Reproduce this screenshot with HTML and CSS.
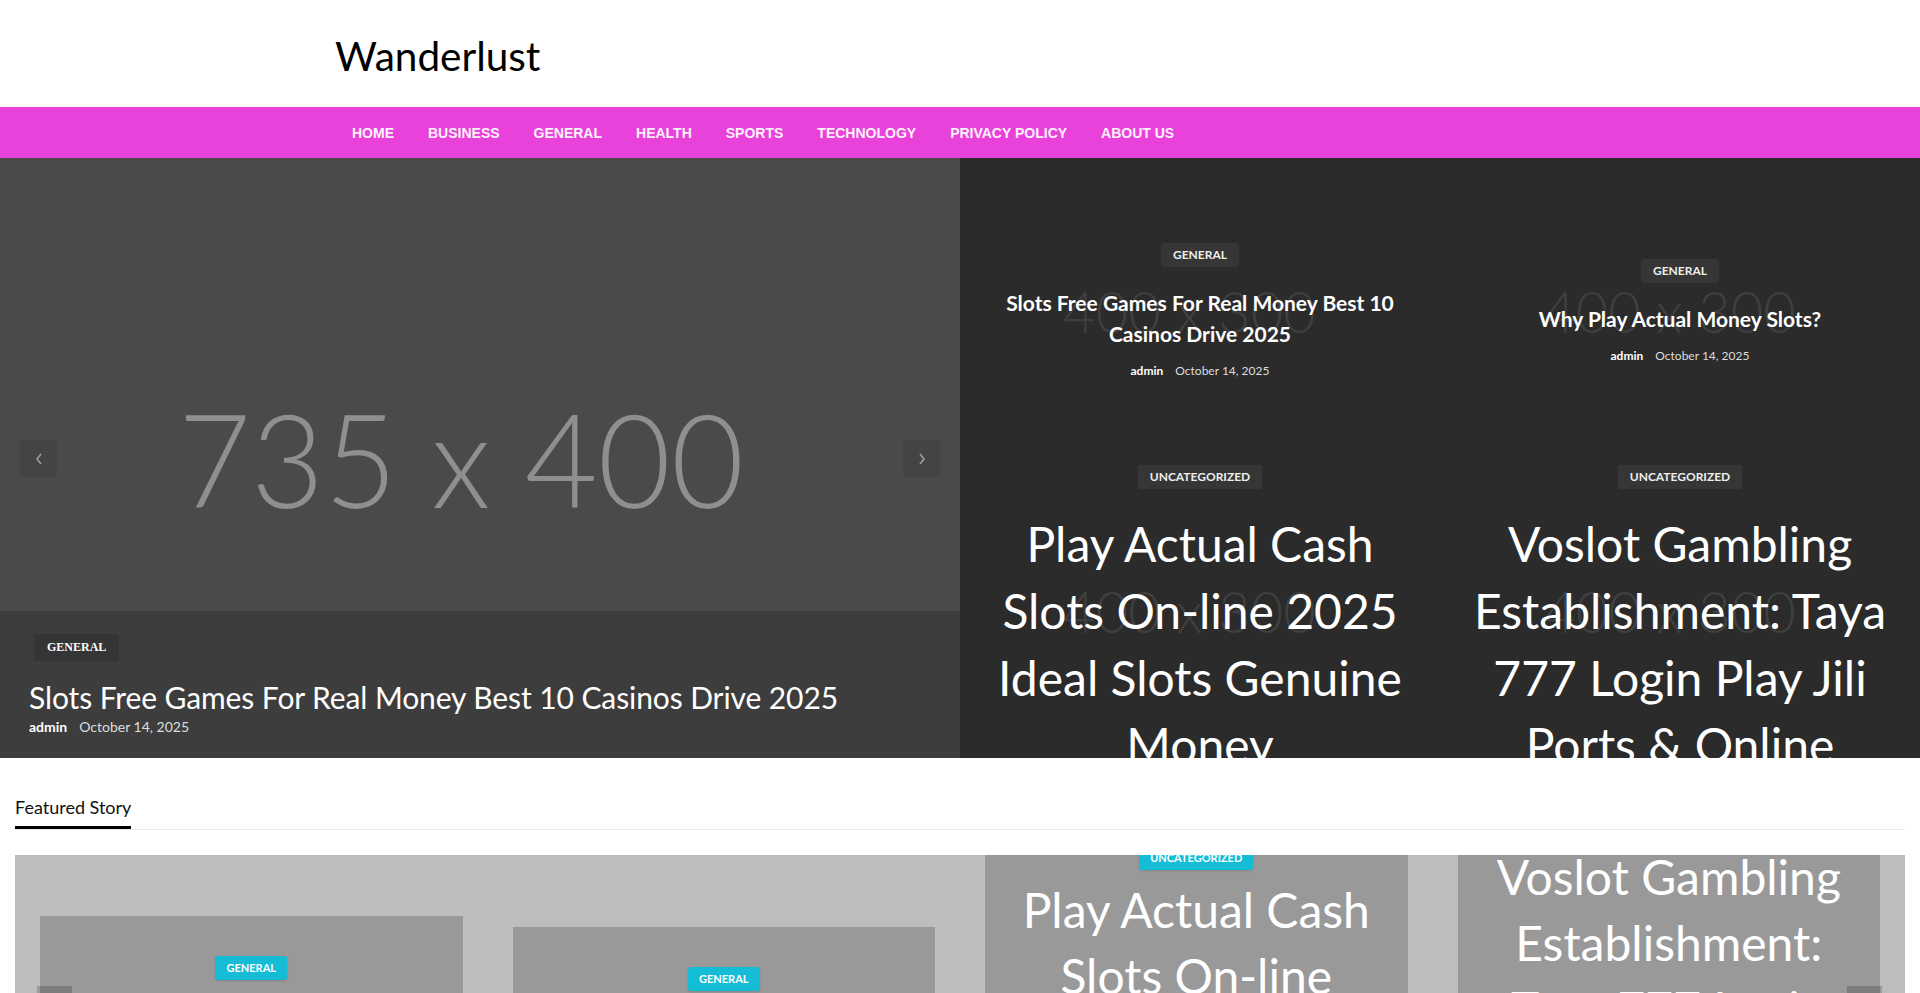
FILE: index.html
```html
<!DOCTYPE html>
<html lang="en">
<head>
<meta charset="UTF-8">
<meta name="viewport" content="width=device-width, initial-scale=1.0">
<title>Wanderlust</title>
<link rel="stylesheet" href="styles.css">
</head>
<body>

<header class="site-header">
  <div class="container">
    <a class="logo" href="#">Wanderlust</a>
  </div>
</header>

<nav class="main-nav">
  <div class="container">
    <ul>
      <li><a href="#home">HOME</a></li>
      <li><a href="#business">BUSINESS</a></li>
      <li><a href="#general">GENERAL</a></li>
      <li><a href="#health">HEALTH</a></li>
      <li><a href="#sports">SPORTS</a></li>
      <li><a href="#technology">TECHNOLOGY</a></li>
      <li><a href="#privacy">PRIVACY POLICY</a></li>
      <li><a href="#about">ABOUT US</a></li>
    </ul>
  </div>
</nav>

<section class="hero">
  <div class="hero-slider">
    <svg class="ph" viewBox="0 0 960 600" preserveAspectRatio="none">
      <text x="178" y="350" font-size="130" textLength="566" lengthAdjust="spacingAndGlyphs">735 x 400</text>
    </svg>
    <button class="arrow prev" aria-label="Previous">
      <svg width="10" height="14" viewBox="0 0 10 14"><polyline points="7,2 3,7 7,12" /></svg>
    </button>
    <button class="arrow next" aria-label="Next">
      <svg width="10" height="14" viewBox="0 0 10 14"><polyline points="3,2 7,7 3,12" /></svg>
    </button>
    <div class="hero-caption">
      <span class="cat-serif">GENERAL</span>
      <h2>Slots Free Games For Real Money Best 10 Casinos Drive 2025</h2>
      <div class="meta"><b>admin</b><span>October 14, 2025</span></div>
    </div>
  </div>

  <div class="hero-grid">
    <article class="grid-item">
      <svg class="ph" viewBox="0 0 480 300"><text x="103" y="175" font-size="58" textLength="253" lengthAdjust="spacingAndGlyphs">400 x 300</text></svg>
      <div class="grid-inner">
        <span class="cat">GENERAL</span>
        <h3 class="title-sm">Slots Free Games For Real Money Best 10 Casinos Drive 2025</h3>
        <div class="meta"><b>admin</b><span>October 14, 2025</span></div>
      </div>
    </article>
    <article class="grid-item">
      <svg class="ph" viewBox="0 0 480 300"><text x="103" y="175" font-size="58" textLength="253" lengthAdjust="spacingAndGlyphs">400 x 300</text></svg>
      <div class="grid-inner">
        <span class="cat">GENERAL</span>
        <h3 class="title-sm">Why Play Actual Money Slots?</h3>
        <div class="meta"><b>admin</b><span>October 14, 2025</span></div>
      </div>
    </article>
    <article class="grid-item">
      <svg class="ph" viewBox="0 0 480 300"><text x="103" y="175" font-size="58" textLength="253" lengthAdjust="spacingAndGlyphs">400 x 300</text></svg>
      <div class="grid-inner">
        <span class="cat">UNCATEGORIZED</span>
        <h3 class="title-lg">Play Actual Cash Slots On-line 2025 Ideal Slots Genuine Money</h3>
        <div class="meta"><b>admin</b><span>October 14, 2025</span></div>
      </div>
    </article>
    <article class="grid-item">
      <svg class="ph" viewBox="0 0 480 300"><text x="103" y="175" font-size="58" textLength="253" lengthAdjust="spacingAndGlyphs">400 x 300</text></svg>
      <div class="grid-inner">
        <span class="cat">UNCATEGORIZED</span>
        <h3 class="title-lg">Voslot Gambling Establishment: Taya 777 Login Play Jili Ports &amp; Online Casino</h3>
        <div class="meta"><b>admin</b><span>October 14, 2025</span></div>
      </div>
    </article>
  </div>
</section>

<section class="featured">
  <h3 class="section-title"><span>Featured Story</span></h3>
  <div class="feat-slider">
    <article class="feat-card">
      <span class="cat-cyan">GENERAL</span>
      <h4 class="title-sm">Slots Free Games For Real Money Best 10 Casinos Drive 2025</h4>
      <div class="meta"><b>admin</b><span>October 14, 2025</span></div>
    </article>
    <article class="feat-card">
      <span class="cat-cyan">GENERAL</span>
      <h4 class="title-sm">Why Play Actual Money Slots?</h4>
      <div class="meta"><b>admin</b><span>October 14, 2025</span></div>
    </article>
    <article class="feat-card">
      <span class="cat-cyan">UNCATEGORIZED</span>
      <h4 class="title-lg">Play Actual Cash Slots On-line 2025 Ideal Slots Genuine Money</h4>
      <div class="meta"><b>admin</b><span>October 14, 2025</span></div>
    </article>
    <article class="feat-card">
      <span class="cat-cyan">UNCATEGORIZED</span>
      <h4 class="title-lg">Voslot Gambling Establishment: Taya 777 Login Play Jili Ports &amp; Online Casino</h4>
      <div class="meta"><b>admin</b><span>October 14, 2025</span></div>
    </article>
    <button class="feat-arrow left" aria-label="Previous"></button>
    <button class="feat-arrow right" aria-label="Next"></button>
  </div>
</section>

</body>
</html>
```

FILE: styles.css
```css
/* base */
body {
  margin: 0;
  padding: 0;
  font-family: Lato, "Open Sans", Arial, sans-serif;
  color: #222;
  background: #fff;
}
a {
  text-decoration: none;
  color: inherit;
}
.container {
  padding: 0 335px;
}

/* header */
.site-header {
  padding: 32px 0 27px;
}
.logo {
  display: block;
  font-size: 40.5px;
  line-height: 48px;
  color: #000;
}

/* navigation */
.main-nav {
  background-color: #e942da;
}
.main-nav ul {
  list-style-type: none;
  margin: 0;
  padding: 0;
  display: flex;
}
.main-nav li a {
  display: block;
  padding: 1px 17px 0;
  line-height: 50px;
  font-family: "Liberation Sans", Arial, sans-serif;
  font-weight: bold;
  font-size: 14px;
  color: #fdf2fc;
}

/* hero */
.hero {
  display: grid;
  grid-template-columns: 1fr 1fr;
  height: 600px;
}
.hero-slider {
  position: relative;
  background-color: #4a4a4a;
  display: flex;
  flex-direction: column;
  justify-content: flex-end;
  overflow: hidden;
}
.ph {
  position: absolute;
  top: 0;
  left: 0;
  width: 100%;
  height: 100%;
  font-family: Lato, sans-serif;
  font-weight: 300;
}
.hero-slider .ph text {
  fill: #8f8f8f;
}
.arrow {
  position: absolute;
  top: 282px;
  width: 37px;
  height: 37px;
  border: 0;
  padding: 0;
  background: rgba(0, 0, 0, 0.08);
  display: flex;
  align-items: center;
  justify-content: center;
  cursor: pointer;
}
.arrow.prev { left: 20px; }
.arrow.next { right: 20px; }
.arrow polyline {
  fill: none;
  stroke: #9c9c9c;
  stroke-width: 1.6;
}
.hero-caption {
  position: relative;
  background-color: #3d3d3d;
  padding: 23px 30px 22px 29px;
  color: #fff;
}
.cat-serif {
  display: inline-block;
  margin-left: 5px;
  padding: 7px 13px;
  line-height: 13px;
  font-family: "Liberation Serif", "Times New Roman", serif;
  font-weight: bold;
  font-size: 12px;
  background: rgba(0, 0, 0, 0.12);
  color: #fff;
}
.hero-caption h2 {
  margin: 16px 0 1px;
  font-size: 30px;
  font-weight: 400;
  line-height: 40px;
  letter-spacing: -0.1px;
}
.meta {
  font-size: 14px;
  line-height: 18px;
  color: #ddd;
}
.meta b {
  color: #fff;
  margin-right: 12px;
}

/* right grid */
.hero-grid {
  display: grid;
  grid-template-columns: 1fr 1fr;
  grid-template-rows: 300px 300px;
  background-color: #2b2b2b;
}
.grid-item {
  position: relative;
  overflow: hidden;
  display: flex;
  padding: 7px 20px 0;
  text-align: center;
}
.grid-item .ph text {
  fill: #3f3f3f;
}
.grid-inner {
  position: relative;
  margin: auto;
  width: 100%;
  display: flex;
  flex-direction: column;
  align-items: center;
  color: #fff;
}
.cat {
  padding: 6px 12px;
  line-height: 12px;
  font-size: 12px;
  font-weight: bold;
  background: #363636;
  color: #eee;
  border-radius: 3px;
  margin-bottom: 20px;
}
.title-sm {
  margin: 0 0 13px;
  font-size: 21px;
  font-weight: bold;
  line-height: 31px;
}
.title-lg {
  margin: 1px 0 11px;
  font-size: 48px;
  font-weight: 400;
  line-height: 67px;
}
.grid-item .meta {
  font-size: 12px;
}

/* featured story */
.featured {
  padding: 37px 15px 0;
}
.section-title {
  margin: 0;
  font-size: 18px;
  font-weight: 400;
  line-height: 24px;
  color: #111;
  border-bottom: 1px solid #e9e9e9;
}
.section-title span {
  display: inline-block;
  padding-bottom: 7px;
  border-bottom: 3px solid #000;
}
.feat-slider {
  position: relative;
  margin-top: 25px;
  height: 300px;
  background-color: #bdbdbd;
  display: flex;
  align-items: center;
  gap: 50px;
  padding: 0 25px;
  overflow: hidden;
}
.feat-card {
  flex: 1 1 0;
  min-width: 0;
  background-color: #999;
  padding: 40px 20px;
  display: flex;
  flex-direction: column;
  align-items: center;
  text-align: center;
  color: #fff;
}
.cat-cyan {
  padding: 6px 11px;
  line-height: 12px;
  font-size: 11px;
  font-weight: bold;
  background: #14bcd5;
  color: #fff;
  border-radius: 3px;
  box-shadow: 0 1px 2px rgba(0, 0, 0, 0.15);
  margin-bottom: 7px;
}
.feat-card .title-sm {
  line-height: 22px;
  margin: 5px 0 2px;
}
.feat-card .title-lg {
  line-height: 66px;
  margin: 0 0 7px;
}
.feat-card .meta {
  font-size: 12px;
  line-height: 16px;
}
.feat-arrow {
  position: absolute;
  top: 131px;
  width: 35px;
  height: 38px;
  border: 0;
  padding: 0;
  background: rgba(0, 0, 0, 0.18);
}
.feat-arrow.left { left: 22px; }
.feat-arrow.right { right: 23px; }
```
